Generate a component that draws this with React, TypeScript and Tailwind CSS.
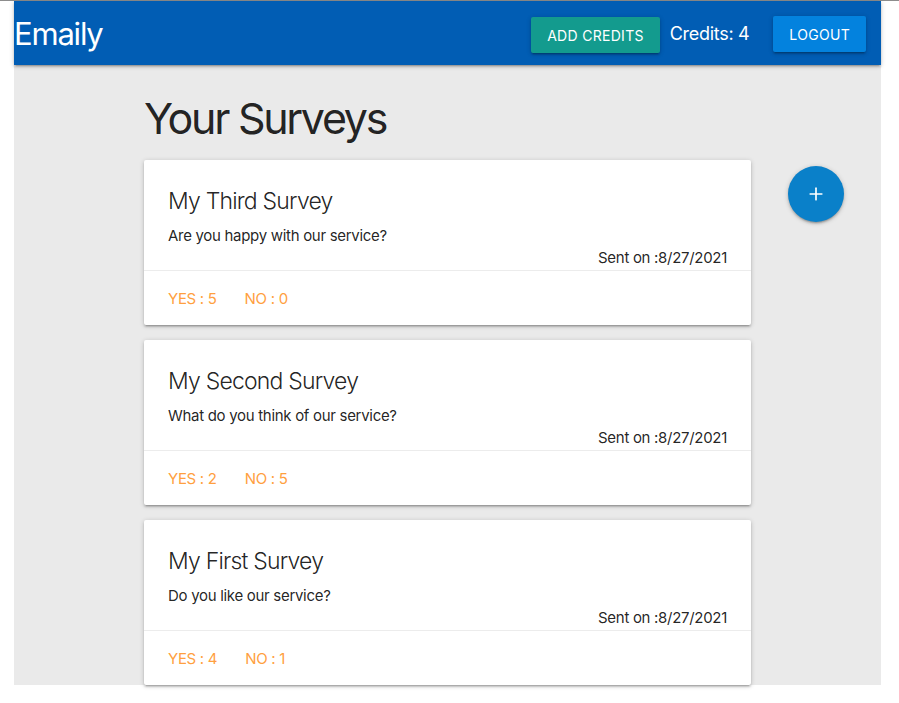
import { Plus } from 'lucide-react'

type Survey = {
  title: string
  body: string
  sent: string
  yes: number
  no: number
}

const SURVEYS: Survey[] = [
  { title: 'My Third Survey', body: 'Are you happy with our service?', sent: '8/27/2021', yes: 5, no: 0 },
  { title: 'My Second Survey', body: 'What do you think of our service?', sent: '8/27/2021', yes: 2, no: 5 },
  { title: 'My First Survey', body: 'Do you like our service?', sent: '8/27/2021', yes: 4, no: 1 },
]

// materialize z-depth-1
const SHADOW =
  'shadow-[0_2px_2px_0_rgba(0,0,0,0.14),0_3px_1px_-2px_rgba(0,0,0,0.12),0_1px_5px_0_rgba(0,0,0,0.2)]'

function Header() {
  return (
    <nav className={`flex h-16 items-center justify-between bg-[#015db4] text-white ${SHADOW}`}>
      <a className="text-[31px] leading-none tracking-[-1.2px]">Emaily</a>
      <div className="flex items-center pr-[15px]">
        <button className={`mt-[4px] h-9 rounded-[2px] bg-[#139b8e] px-4 text-[14px] tracking-[0.3px] text-white uppercase ${SHADOW}`}>
          Add Credits
        </button>
        <span className="ml-[10px] text-[18px] tracking-[-0.3px]">Credits: 4</span>
        <button className={`ml-[24px] mt-[2px] h-9 rounded-[2px] bg-[#0382de] px-4 text-[14px] tracking-[0.3px] text-white uppercase ${SHADOW}`}>
          Logout
        </button>
      </div>
    </nav>
  )
}

function SurveyCard({ survey }: { survey: Survey }) {
  return (
    <div className={`rounded-[2px] bg-white ${SHADOW}`}>
      <div className="px-6 pt-[25px] pb-px text-[15px] tracking-[-0.3px]">
        <div className="mb-2 text-[23px] leading-8 font-light tracking-[-0.8px]">{survey.title}</div>
        <p className="leading-[22px]">{survey.body}</p>
        <p className="text-right leading-[22px]">Sent on :{survey.sent}</p>
      </div>
      <div className="flex gap-[28px] border-t border-[rgba(160,160,160,0.2)] px-6 pt-[17px] pb-[15px] text-[15px] leading-[22px] tracking-[-0.3px] text-[#ffa03f]">
        <span>YES : {survey.yes}</span>
        <span>NO : {survey.no}</span>
      </div>
    </div>
  )
}

export default function App() {
  return (
    <div className="min-h-[703px] bg-white font-['Inter',sans-serif] text-[rgba(0,0,0,0.87)]">
      <div className="h-px bg-[#8d8d8d]" />
      <div className="relative mx-[14px] w-[867px] bg-[#eaeaea]">
        <Header />
        <div className="mx-auto w-[607px]">
          <h3 className="pt-[29px] pb-[18px] text-[43px] leading-[48px] tracking-[-2.3px]">Your Surveys</h3>
          <div className="flex flex-col gap-[15px]">
            {SURVEYS.map((s) => (
              <SurveyCard key={s.title} survey={s} />
            ))}
          </div>
        </div>
        <button className={`absolute top-[165px] left-[774px] flex h-14 w-14 items-center justify-center rounded-full bg-[#0a80c9] text-white ${SHADOW}`}>
          <Plus className="h-5 w-5" strokeWidth={2} />
        </button>
      </div>
    </div>
  )
}
